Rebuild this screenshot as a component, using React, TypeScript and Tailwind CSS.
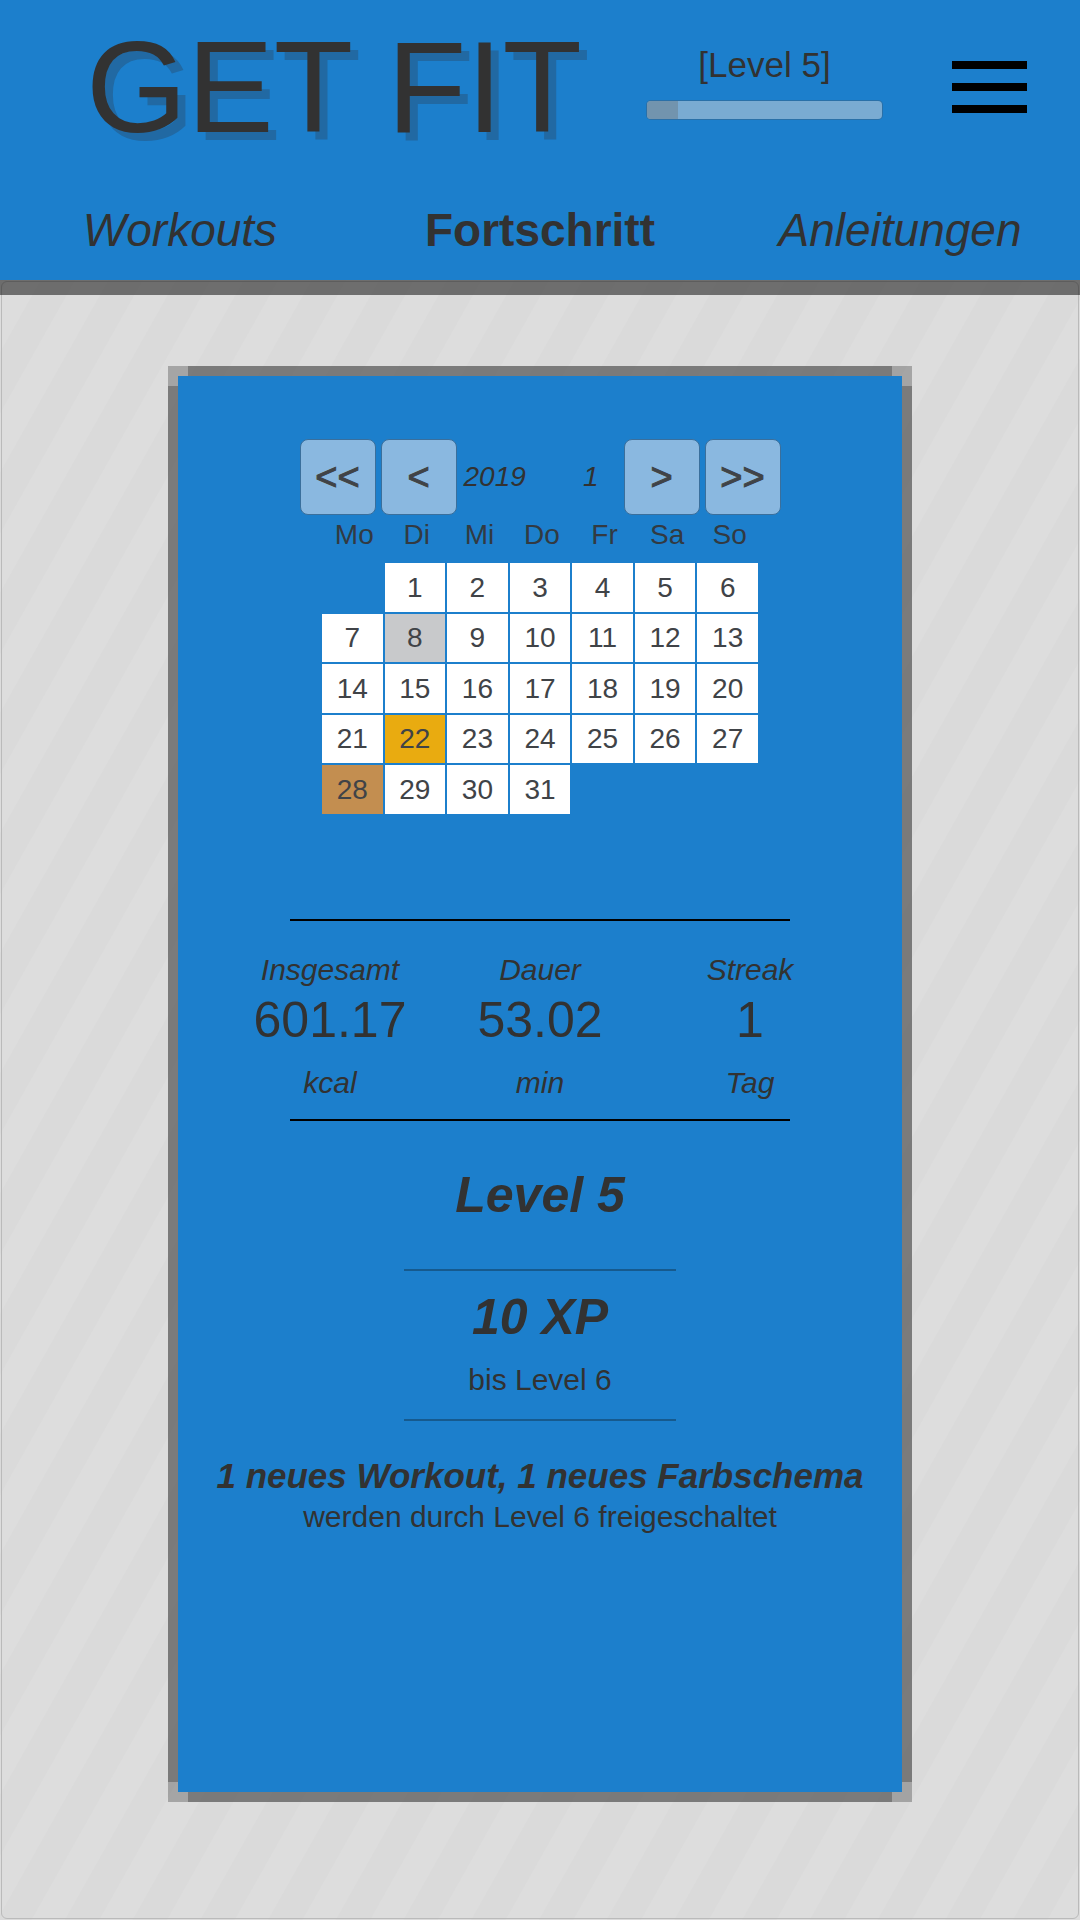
const WEEKDAYS = ['Mo', 'Di', 'Mi', 'Do', 'Fr', 'Sa', 'So'];

const WEEKS: (number | null)[][] = [
  [null, 1, 2, 3, 4, 5, 6],
  [7, 8, 9, 10, 11, 12, 13],
  [14, 15, 16, 17, 18, 19, 20],
  [21, 22, 23, 24, 25, 26, 27],
  [28, 29, 30, 31, null, null, null],
];

const MEDALS: Record<number, string> = {
  8: 'bg-[#c8c9cb]',
  22: 'bg-[#e9ab10]',
  28: 'bg-[#c38e50]',
};

const STATS = [
  { label: 'Insgesamt', value: '601.17', unit: 'kcal' },
  { label: 'Dauer', value: '53.02', unit: 'min' },
  { label: 'Streak', value: '1', unit: 'Tag' },
];

function StepButton({ label, name }: { label: string; name: string }) {
  return (
    <button
      type="button"
      aria-label={name}
      className="flex size-[76px] items-center justify-center rounded-lg border border-[#3a6f9c] bg-[#8ab8e0] text-[38px] leading-none text-[#404347] [-webkit-text-stroke:1px_#404347]"
    >
      {label}
    </button>
  );
}

function Header() {
  return (
    <header className="relative bg-[#1c7fcc] pt-[22px] pb-[22px] shadow-[0_15px_0_rgba(0,0,0,0.5)]">
      <div className="flex items-center justify-between pr-[53px] pl-[86px]">
        <h1 className="text-[130px] leading-[130px] whitespace-nowrap [text-shadow:8px_8px_0_#2169a3]">GET FIT</h1>
        <div className="mt-[23px] mr-[70px] ml-auto w-[235px] self-start text-center">
          <p className="text-[35px] leading-10">[Level 5]</p>
          <div
            role="progressbar"
            aria-label="Level 5"
            aria-valuenow={13}
            aria-valuemin={0}
            aria-valuemax={100}
            className="mt-4 h-[18px] overflow-hidden rounded-sm bg-[#7aabd2] ring-1 ring-[#2a70a8]"
          >
            <div className="h-full w-[13%] bg-[#7294ae]" />
          </div>
        </div>
        <button type="button" aria-label="Menü" className="flex w-[75px] flex-col gap-[14px]">
          <span className="h-2 w-full bg-black" />
          <span className="h-2 w-full bg-black" />
          <span className="h-2 w-full bg-black" />
        </button>
      </div>
      <nav className="mt-[50px] grid grid-cols-3 text-center text-[46px] leading-[56px]">
        <a href="#workouts" className="italic">Workouts</a>
        <a href="#fortschritt" aria-current="page" className="font-bold">Fortschritt</a>
        <a href="#anleitungen" className="italic">Anleitungen</a>
      </nav>
    </header>
  );
}

function Calendar() {
  return (
    <section aria-label="Kalender" className="flex flex-col items-center text-[28px]">
      <div className="grid grid-cols-[repeat(6,76px)] items-center gap-[5px]">
        <StepButton label="<<" name="Voriges Jahr" />
        <StepButton label="<" name="Voriger Monat" />
        <span className="pl-[2px] italic">2019</span>
        <span className="pr-5 text-right italic">1</span>
        <StepButton label=">" name="Nächster Monat" />
        <StepButton label=">>" name="Nächstes Jahr" />
      </div>
      <table className="w-[440px] table-fixed border-separate border-spacing-[2px] text-center text-[#404347]">
        <thead className="text-[#323a42]">
          <tr>
            {WEEKDAYS.map((day) => (
              <th key={day} scope="col" className="h-11 p-0 pl-1 text-center align-top leading-9 font-normal">{day}</th>
            ))}
          </tr>
        </thead>
        <tbody>
          {WEEKS.map((week, row) => (
            <tr key={row} className="h-[49px] even:h-12">
              {week.map((day, col) =>
                day === null ? (
                  <td key={col} className="p-0" />
                ) : (
                  <td key={col} className={`p-0 leading-8 ${MEDALS[day] ?? 'bg-white'}`}>{day}</td>
                ),
              )}
            </tr>
          ))}
        </tbody>
      </table>
    </section>
  );
}

export default function App() {
  return (
    <div className="flex min-h-screen flex-col bg-[#dddddd] font-['Liberation_Sans',Arial,sans-serif] text-[#323232]">
      <Header />
      <main className="flex flex-1 justify-center bg-[repeating-linear-gradient(119.4deg,#dadada_0px,#dadada_6px,#dddddd_7px,#dddddd_35px,#dadada_36px,#dadada_59px)] p-px">
        <div className="flex flex-1 justify-center rounded-md border border-[#bababa] px-4 pt-[94px] pb-[126px]">
          <article className="flex w-full max-w-[724px] flex-col bg-[#1c7fcc] pt-[63px] pb-12 shadow-[10px_10px_0_rgba(0,0,0,0.25),-10px_10px_0_rgba(0,0,0,0.25),10px_-10px_0_rgba(0,0,0,0.25),-10px_-10px_0_rgba(0,0,0,0.25)]">
            <Calendar />

            <hr className="mx-auto mt-[103px] h-[2px] w-[500px] border-0 bg-black" />
            <dl className="mx-auto mt-[29px] grid w-[630px] grid-cols-3 text-center">
              {STATS.map((stat) => (
                <div key={stat.label}>
                  <dt className="text-[30px] leading-10 italic">{stat.label}</dt>
                  <dd className="text-[50px] leading-[60px]">{stat.value}</dd>
                  <dd className="mt-[13px] text-[30px] leading-10 italic">{stat.unit}</dd>
                </div>
              ))}
            </dl>
            <hr className="mx-auto mt-4 h-[2px] w-[500px] border-0 bg-black" />

            <section className="text-center">
              <h2 className="mt-11 text-[50px] leading-[60px] font-bold italic">Level 5</h2>
              <hr className="mx-auto mt-11 h-[2px] w-[272px] border-0 bg-[#165a8e]" />
              <p className="mt-4 text-[50px] leading-[60px] font-bold italic">10 XP</p>
              <p className="mt-[13px] text-[30px] leading-10">bis Level 6</p>
              <hr className="mx-auto mt-[19px] h-[2px] w-[272px] border-0 bg-[#165a8e]" />
              <p className="mt-[35px] text-[35px] leading-10 font-bold italic">1 neues Workout, 1 neues Farbschema</p>
              <p className="mt-px text-[30px] leading-10">werden durch Level 6 freigeschaltet</p>
            </section>
          </article>
        </div>
      </main>
    </div>
  );
}
